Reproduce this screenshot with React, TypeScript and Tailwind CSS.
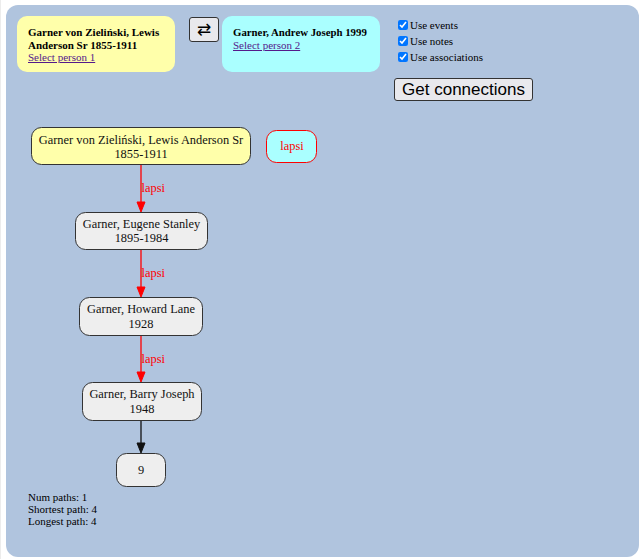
import React from "react";

const serif = { fontFamily: '"Liberation Serif", "Times New Roman", serif' };

function Edge({ y1, y2, color, label, ly }: { y1: number; y2: number; color: string; label?: string; ly?: number }) {
  const x = 124;
  return (
    <g>
      <line x1={x} y1={y1} x2={x} y2={y2 - 9} stroke={color} strokeWidth={1.3} />
      <polygon points={`${x - 4},${y2 - 10} ${x + 4},${y2 - 10} ${x},${y2}`} fill={color} stroke={color} strokeWidth={1} />
      {label && (
        <text x={x + 0.5} y={ly} fill="#ff0000" fontSize={12.4} style={serif}>
          {label}
        </text>
      )}
    </g>
  );
}

function Node({ x, y, w, h, fill, lines }: { x: number; y: number; w: number; h: number; fill: string; lines: { t: string; y: number }[] }) {
  return (
    <g>
      <rect x={x + 0.5} y={y + 0.5} width={w} height={h} rx={10} ry={10} fill={fill} stroke="#333" strokeWidth={1} />
      {lines.map((l, i) => (
        <text key={i} x={x + w / 2 + 0.5} y={l.y} textAnchor="middle" fill="#111" fontSize={12.4} style={serif}>
          {l.t}
        </text>
      ))}
    </g>
  );
}

export default function App() {
  return (
    <div className="h-[559px] w-[639px] bg-white overflow-hidden border-l border-[#ececec]" style={serif}>
      <div className="ml-[5px] mt-[5px] w-[633px] h-[552px] rounded-[12px] bg-[#b0c4de] p-[11px]">
        <div className="flex items-start">
          <div className="w-[158px] h-[56px] rounded-[10px] bg-[#ffffaa] px-[11px] pt-[10px] text-[11px] leading-[12.5px] text-black">
            <div className="font-bold">Garner von Zieliński, Lewis Anderson Sr 1855-1911</div>
            <a href="#" className="underline text-[#551a8b]">Select person 1</a>
          </div>
          <button className="ml-[14px] mt-[1px] w-[30px] h-[25px] rounded-[3px] border border-[#333] bg-[#e9e9ed] flex items-center justify-center text-[17px] leading-none text-black" style={{ fontFamily: '"DejaVu Sans", sans-serif' }}>
            ⇄
          </button>
          <div className="ml-[3px] w-[158px] h-[56px] rounded-[10px] bg-[#aaffff] px-[11px] pt-[10px] text-[11px] leading-[12.5px] text-black">
            <div className="font-bold whitespace-nowrap text-[10.8px]">Garner, Andrew Joseph 1999</div>
            <a href="#" className="underline text-[#551a8b]">Select person 2</a>
          </div>
          <div className="ml-[14px] mt-[1px] flex flex-col">
            {["Use events", "Use notes", "Use associations"].map((t) => (
              <label key={t} className="h-[16px] flex items-center text-[11px] text-black">
                <input type="checkbox" defaultChecked className="w-[10px] h-[10px] ml-[4px] mr-[2px] m-0 accent-[#0075ff]" />
                <span>{t}</span>
              </label>
            ))}
            <button
              className="mt-[13px] h-[23px] w-[139px] rounded-[3px] border border-[#333] bg-[#e9e9ed] text-[17px] leading-none text-black flex items-center justify-center"
              style={{ fontFamily: '"Liberation Sans", Arial, sans-serif' }}
            >
              Get connections
            </button>
          </div>
        </div>

        <svg width={320} height={372} className="mt-[14px] block">
          <Node x={14} y={12} w={219} h={37} fill="#ffffaa" lines={[{ t: "Garner von Zieliński, Lewis Anderson Sr", y: 29 }, { t: "1855-1911", y: 43 }]} />
          <rect x={249.5} y={15.5} width={50} height={32} rx={10} ry={10} fill="#aaffff" stroke="#ff0000" strokeWidth={1} />
          <text x={275} y={35} textAnchor="middle" fill="#ff0000" fontSize={12.4} style={serif}>lapsi</text>

          <Edge y1={50} y2={97} color="#ff0000" label="lapsi" ly={77} />
          <Node x={58} y={97} w={132} h={37} fill="#eeeeee" lines={[{ t: "Garner, Eugene Stanley", y: 113 }, { t: "1895-1984", y: 127 }]} />

          <Edge y1={135} y2={182} color="#ff0000" label="lapsi" ly={162} />
          <Node x={62} y={182} w={123} h={38} fill="#eeeeee" lines={[{ t: "Garner, Howard Lane", y: 198 }, { t: "1928", y: 213 }]} />

          <Edge y1={221} y2={267} color="#ff0000" label="lapsi" ly={248} />
          <Node x={65} y={267} w={119} h={38} fill="#eeeeee" lines={[{ t: "Garner, Barry Joseph", y: 283 }, { t: "1948", y: 298 }]} />

          <Edge y1={306} y2={338} color="#111111" />
          <Node x={99} y={338} w={49} h={33} fill="#eeeeee" lines={[{ t: "9", y: 359 }]} />
        </svg>

        <div className="mt-[4px] ml-[11px] text-[11px] leading-[12px] text-black">
          <div>Num paths: 1</div>
          <div>Shortest path: 4</div>
          <div>Longest path: 4</div>
        </div>
      </div>
    </div>
  );
}
